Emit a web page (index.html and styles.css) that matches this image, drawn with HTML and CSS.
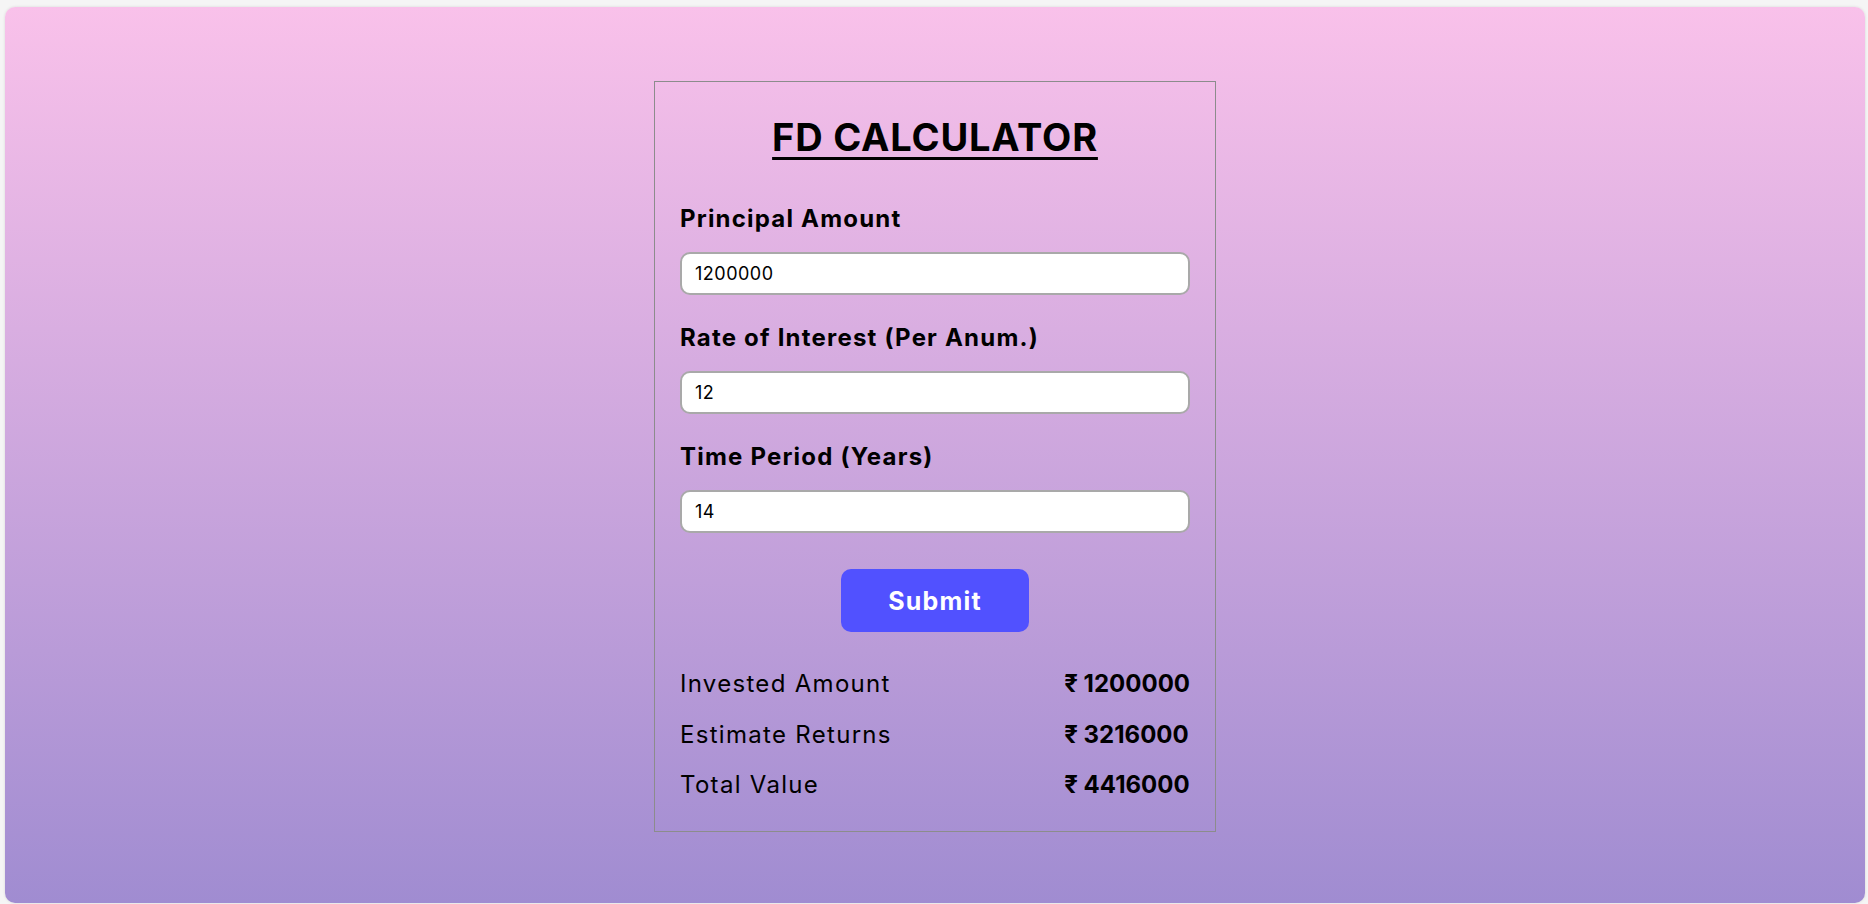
FILE: index.html
```html
<!DOCTYPE html>
<html lang="en">
<head>
<meta charset="utf-8">
<title>FD Calculator</title>
<link rel="stylesheet" href="styles.css">
</head>
<body>
<div class="page">
  <div class="card">
    <h1 class="title">FD CALCULATOR</h1>
    <form class="form">
      <div class="field">
        <label class="label" for="p">Principal Amount</label>
        <input class="input" id="p" type="text" value="1200000">
      </div>
      <div class="field">
        <label class="label" for="r">Rate of Interest (Per Anum.)</label>
        <input class="input" id="r" type="text" value="12">
      </div>
      <div class="field">
        <label class="label" for="t">Time Period (Years)</label>
        <input class="input" id="t" type="text" value="14">
      </div>
      <div class="actions">
        <button class="submit" type="button">Submit</button>
      </div>
    </form>
    <div class="results">
      <span class="res-label">Invested Amount</span>
      <span class="res-value">₹ 1200000</span>
      <span class="res-label">Estimate Returns</span>
      <span class="res-value">₹ 3216000</span>
      <span class="res-label">Total Value</span>
      <span class="res-value">₹ 4416000</span>
    </div>
  </div>
</div>
</body>
</html>
```

FILE: styles.css
```css
* { box-sizing: border-box; }

html, body {
  margin: 0;
  padding: 0;
  height: 100%;
}

body {
  background: #f5f5f5;
  font-family: Inter, "Noto Sans", "Liberation Sans", sans-serif;
  color: #000;
  overflow: hidden;
}

.page {
  margin: 7px 3px 0 5px;
  height: calc(100vh - 8px);
  border-radius: 10px;
  background: linear-gradient(to bottom, #f9c1ea 0%, #a08cd1 100%);
  box-shadow: 0 0 3px rgba(0, 0, 0, 0.12);
  padding-top: 74px;
  display: flex;
  justify-content: center;
  align-items: flex-start;
}

.card {
  width: 562px;
  border: 1px solid #8c8c8c;
  padding: 0 25px 31px;
}

.title {
  margin: 32px 0 0;
  font-size: 38px;
  line-height: 46px;
  font-weight: 700;
  letter-spacing: 0.8px;
  text-align: center;
  text-decoration: underline;
  text-decoration-thickness: 3px;
  text-underline-offset: 6px;
}

.form {
  display: flex;
  flex-direction: column;
  margin-top: 44px;
}

.field {
  display: flex;
  flex-direction: column;
  gap: 18px;
  margin-bottom: 28px;
}

.label {
  font-size: 24px;
  line-height: 30px;
  font-weight: 700;
  letter-spacing: 1.2px;
}

.input {
  height: 43px;
  width: 100%;
  border: 2px solid #a9a9a9;
  border-radius: 10px;
  background: #fff;
  padding: 0 13px;
  font-family: inherit;
  font-size: 18px;
  letter-spacing: 0.5px;
  color: #000;
  outline: none;
}

.actions {
  display: flex;
  justify-content: center;
  margin-top: 8px;
}

.submit {
  width: 188px;
  height: 63px;
  border: none;
  border-radius: 10px;
  background: #5151ff;
  color: #fff;
  font-family: inherit;
  font-size: 25px;
  font-weight: 700;
  letter-spacing: 1.2px;
}

.results {
  display: grid;
  grid-template-columns: 1fr auto;
  row-gap: 20.5px;
  margin-top: 37px;
  font-size: 24px;
  line-height: 30px;
}

.res-label {
  letter-spacing: 1.3px;
}

.res-value {
  font-weight: 700;
}
```
